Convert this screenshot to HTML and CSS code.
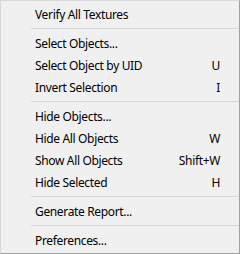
FILE: index.html
```html
<!DOCTYPE html>
<html>
<head>
    <title>Context Menu</title>
    <link rel="stylesheet" href="styles.css">
</head>
<body>
    <div class="menu">
        <div class="item"><span class="label">Verify All Textures</span></div>
        <div class="sep"></div>
        <div class="item"><span class="label">Select Objects...</span></div>
        <div class="item"><span class="label">Select Object by UID</span><span class="key">U</span></div>
        <div class="item"><span class="label">Invert Selection</span><span class="key">I</span></div>
        <div class="sep"></div>
        <div class="item"><span class="label">Hide Objects...</span></div>
        <div class="item"><span class="label">Hide All Objects</span><span class="key">W</span></div>
        <div class="item"><span class="label">Show All Objects</span><span class="key">Shift+W</span></div>
        <div class="item"><span class="label">Hide Selected</span><span class="key">H</span></div>
        <div class="sep"></div>
        <div class="item"><span class="label">Generate Report...</span></div>
        <div class="sep"></div>
        <div class="item"><span class="label">Preferences...</span></div>
    </div>
</body>
</html>
```

FILE: styles.css
```css
body {
    margin: 0;
    font-family: "Noto Sans", "Open Sans", sans-serif;
    font-size: 12px;
    letter-spacing: -0.35px;
    color: #000;
}
.menu {
    width: 240px;
    height: 254px;
    box-sizing: border-box;
    background: #f0f0f0;
    border: 1px solid #a0a0a0;
    border-top-color: #d8d8d8;
    border-left-color: #d8d8d8;
    padding: 2px 0;
}
.item {
    display: flex;
    align-items: center;
    justify-content: space-between;
    height: 22px;
    padding: 0 19px 0 34px;
}
.key {
    text-align: right;
}
.sep {
    height: 7px;
    margin-left: 30px;
    margin-right: 1px;
    display: flex;
    align-items: center;
}
.sep::before {
    content: "";
    flex: 1;
    height: 1px;
    background: #d7d7d7;
}
```
